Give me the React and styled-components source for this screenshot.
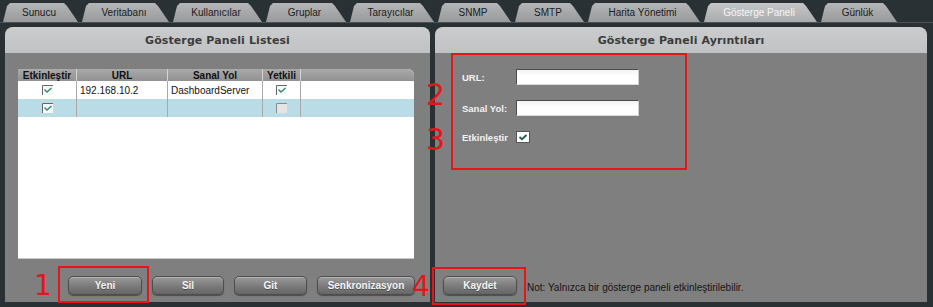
import React from "react";
import styled, { createGlobalStyle } from "styled-components";

const GlobalStyle = createGlobalStyle`
  html, body {
    margin: 0;
    padding: 0;
    background: #293135;
  }
`;

const Screen = styled.div`
  position: relative;
  width: 933px;
  height: 307px;
  overflow: hidden;
  background: #293135;
  font-family: "Liberation Sans", Arial, sans-serif;
  display: flex;
  flex-direction: column;
`;

const TabBar = styled.div`
  height: 19px;
  padding: 3px 0 0 3px;
  display: flex;
  gap: 4px;
  border-bottom: 1px solid #4a5357;
`;

const Tab = styled.div`
  width: ${(p) => p.w}px;
  height: 19px;
  display: flex;
  align-items: center;
  justify-content: center;
  padding-right: 3px;
  box-sizing: border-box;
  font-size: 10px;
  color: ${(p) => (p.active ? "#f6f6f6" : "#202020")};
  background: ${(p) =>
    p.active
      ? "linear-gradient(#c4c6c8, #a9abad)"
      : "linear-gradient(#b3b5b7, #989a9c)"};
  clip-path: polygon(
    0 100%,
    4px 3px,
    7px 0,
    calc(100% - 14px) 0,
    calc(100% - 11px) 3px,
    100% 100%
  );
`;

const Panels = styled.div`
  display: flex;
  gap: 5px;
  padding: 4px 6px 0 5px;
  height: 275px;
`;

const Panel = styled.div`
  width: ${(p) => p.w}px;
  display: flex;
  flex-direction: column;
  border-radius: 8px 8px 0 0;
  overflow: hidden;
  background: #7f7f7f;
`;

const PanelHeader = styled.div`
  height: 26px;
  flex-shrink: 0;
  display: flex;
  align-items: center;
  justify-content: center;
  background: linear-gradient(#caccce, #c0c2c4);
  font-family: "DejaVu Sans", Verdana, sans-serif;
  font-weight: bold;
  font-size: 11px;
  color: #3c3c3c;
  letter-spacing: 0.1px;
`;

const PanelBody = styled.div`
  flex: 1;
  display: flex;
  flex-direction: column;
  padding: ${(p) => p.pad};
`;

const Table = styled.div`
  width: 396px;
  height: 189px;
  margin-left: 13px;
  background: #ffffff;
  border-radius: 0 6px 0 0;
  overflow: hidden;
  border-bottom: 1px solid #c8c8c8;
`;

const Row = styled.div`
  display: grid;
  grid-template-columns: 59px 91px 95px 38px 1fr;
  height: ${(p) => (p.head ? 12 : 18)}px;
  background: ${(p) =>
    p.head ? "linear-gradient(#aaaaaa, #919191)" : p.sel ? "#b9dce7" : "#ffffff"};
`;

const Cell = styled.div`
  display: flex;
  align-items: center;
  justify-content: ${(p) => (p.center ? "center" : "flex-start")};
  padding-left: ${(p) => (p.center ? 0 : 3)}px;
  font-size: 10px;
  color: #111;
  border-right: ${(p) => (p.last ? "none" : p.head ? "1px solid #d4d4d4" : "1px solid #a8a8a8")};
  font-weight: ${(p) => (p.head ? "bold" : "normal")};
`;

const Buttons = styled.div`
  display: flex;
  justify-content: ${(p) => (p.start ? "flex-start" : "flex-end")};
  align-items: center;
  gap: ${(p) => p.gap}px;
  margin-top: auto;
  padding-right: ${(p) => (p.start ? 0 : 15)}px;
`;

const Button = styled.div`
  width: ${(p) => p.w}px;
  height: 19px;
  box-sizing: border-box;
  border-radius: 5px;
  border: 1px solid #4e4e4e;
  background: linear-gradient(#9a9a9a, #7a7a7a 55%, #666666);
  box-shadow: inset 0 1px 0 rgba(255, 255, 255, 0.25), 0 1px 1px rgba(0, 0, 0, 0.4);
  display: flex;
  align-items: center;
  justify-content: center;
  font-size: 10px;
  font-weight: bold;
  color: #f4f4f4;
  text-shadow: 0 1px 0 rgba(0, 0, 0, 0.35);
`;

const Note = styled.div`
  font-size: 10px;
  color: #151515;
  margin-top: 4px;
`;

const Form = styled.div`
  display: flex;
  flex-direction: column;
  gap: 15px;
  padding-left: 19px;
`;

const FormRow = styled.div`
  display: flex;
  align-items: center;
  height: ${(p) => p.h}px;
`;

const Label = styled.div`
  width: 54px;
  font-size: 9.5px;
  font-weight: bold;
  color: #f2f2f2;
`;

const Input = styled.div`
  width: 123px;
  height: 16px;
  box-sizing: border-box;
  background: linear-gradient(#f2f2f2, #ffffff 40%);
  border: 1px solid #4c4c4c;
  border-right-color: #cfcfcf;
  border-bottom-color: #dcdcdc;
`;

const Annotation = styled.div`
  position: absolute;
  left: ${(p) => p.x}px;
  top: ${(p) => p.y}px;
  width: ${(p) => p.w}px;
  height: ${(p) => p.h}px;
  box-sizing: border-box;
  border: 2px solid #e8141c;
`;

const Digit = styled.div`
  position: absolute;
  left: ${(p) => p.x}px;
  top: ${(p) => p.y}px;
  font-family: "DejaVu Sans", sans-serif;
  font-size: ${(p) => p.size}px;
  line-height: 1;
  color: #e8141c;
`;

const Check = ({ checked = true, disabled = false, big = false }) => {
  const w = big ? 14 : 11;
  const h = big ? 12 : 10;
  return (
    <svg width={w} height={h} viewBox={`0 0 ${w} ${h}`}>
      <rect x="0" y="0" width={w} height={h} fill={disabled ? "#e4e4e4" : big ? "#ffffff" : "#f4f8f8"} />
      {big ? (
        <rect x="0.5" y="0.5" width={w - 1} height={h - 1} fill="none" stroke="#555" />
      ) : (
        <path d={`M0.5 ${h} V0.5 H${w}`} fill="none" stroke={disabled ? "#8a8a8a" : "#666"} />
      )}
      {checked &&
        (big ? (
          <path d="M3.5 6 L6 8.2 L10.5 4" fill="none" stroke="#1f5e4c" strokeWidth="1.8" />
        ) : (
          <path d="M2.5 4.5 L5 7 L9.5 3" fill="none" stroke="#2f8b70" strokeWidth="1.4" />
        ))}
    </svg>
  );
};

const tabs = [
  ["Sunucu", 75],
  ["Veritabanı", 87],
  ["Kullanıcılar", 89],
  ["Gruplar", 80],
  ["Tarayıcılar", 84],
  ["SNMP", 73],
  ["SMTP", 69],
  ["Harita Yönetimi", 112],
  ["Gösterge Paneli", 113],
  ["Günlük", 76],
];

export default function App() {
  return (
    <Screen>
      <GlobalStyle />
      <TabBar>
        {tabs.map(([name, w]) => (
          <Tab key={name} w={w} active={name === "Gösterge Paneli"}>
            {name}
          </Tab>
        ))}
      </TabBar>
      <Panels>
        <Panel w={425}>
          <PanelHeader>Gösterge Paneli Listesi</PanelHeader>
          <PanelBody pad="16px 0 7px 0">
            <Table>
              <Row head>
                <Cell head center>Etkinleştir</Cell>
                <Cell head center>URL</Cell>
                <Cell head center>Sanal Yol</Cell>
                <Cell head center>Yetkili</Cell>
                <Cell head last />
              </Row>
              <Row>
                <Cell center><Check /></Cell>
                <Cell>192.168.10.2</Cell>
                <Cell>DashboardServer</Cell>
                <Cell center><Check /></Cell>
                <Cell last />
              </Row>
              <Row sel>
                <Cell center><Check /></Cell>
                <Cell />
                <Cell />
                <Cell center><Check checked={false} disabled /></Cell>
                <Cell last />
              </Row>
            </Table>
            <Buttons gap={10}>
              <Button w={74}>Yeni</Button>
              <Button w={72}>Sil</Button>
              <Button w={73}>Git</Button>
              <Button w={98}>Senkronizasyon</Button>
            </Buttons>
          </PanelBody>
        </Panel>
        <Panel w={492}>
          <PanelHeader>Gösterge Paneli Ayrıntıları</PanelHeader>
          <PanelBody pad="16px 0 7px 8px">
            <Form>
              <FormRow h={16}>
                <Label>URL:</Label>
                <Input />
              </FormRow>
              <FormRow h={16}>
                <Label>Sanal Yol:</Label>
                <Input />
              </FormRow>
              <FormRow h={12}>
                <Label>Etkinleştir</Label>
                <Check big />
              </FormRow>
            </Form>
            <Buttons start gap={10}>
              <Button w={74}>Kaydet</Button>
              <Note>Not: Yalnızca bir gösterge paneli etkinleştirilebilir.</Note>
            </Buttons>
          </PanelBody>
        </Panel>
      </Panels>

      <Annotation x={58} y={266} w={91} h={37} />
      <Annotation x={451} y={53} w={236} h={117} />
      <Annotation x={432} y={267} w={94} h={38} />
      <Digit x={34} y={272} size={28}>1</Digit>
      <Digit x={426} y={80} size={30}>2</Digit>
      <Digit x={426} y={125} size={30}>3</Digit>
      <Digit x={412} y={273} size={28}>4</Digit>
    </Screen>
  );
}
